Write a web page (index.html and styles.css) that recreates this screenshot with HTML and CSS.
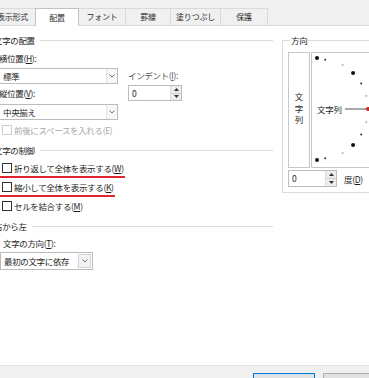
FILE: index.html
```html
<!DOCTYPE html>
<html lang="ja">
<head>
<meta charset="utf-8">
<title>セルの書式設定 - 配置</title>
<link rel="stylesheet" href="styles.css">
</head>
<body>
<div class="dlg">
  <div class="tabs">
    <div class="tab t1">表示形式</div>
    <div class="tab t2 sel">配置</div>
    <div class="tab t3">フォント</div>
    <div class="tab t4">罫線</div>
    <div class="tab t5">塗りつぶし</div>
    <div class="tab t6">保護</div>
  </div>
  <div class="panel">
    <div class="left">
      <div class="group"><span>文字の配置</span></div>
      <div class="sec">
        <div class="hv">
          <div class="hvl">
            <div class="lbl">横位置(<u>H</u>):</div>
            <div class="combo mt4"><span class="cv">標準</span><span class="arr"><svg width="6" height="4" viewBox="0 0 6 4"><polyline points="0.5,0.5 3,3 5.5,0.5" fill="none" stroke="#707070" stroke-width="1"/></svg></span></div>
            <div class="lbl mt3">縦位置(<u>V</u>):</div>
            <div class="combo mt5"><span class="cv">中央揃え</span><span class="arr"><svg width="6" height="4" viewBox="0 0 6 4"><polyline points="0.5,0.5 3,3 5.5,0.5" fill="none" stroke="#707070" stroke-width="1"/></svg></span></div>
          </div>
          <div class="hvr">
            <div class="lbl dim">インデント(<u>I</u>):</div>
            <div class="spin mt4"><span class="sv">0</span><span class="btns"><i><svg width="5" height="3" viewBox="0 0 5 3"><polygon points="0,3 2.5,0 5,3" fill="#333"/></svg></i><i><svg width="5" height="3" viewBox="0 0 5 3"><polygon points="0,0 5,0 2.5,3" fill="#333"/></svg></i></span></div>
          </div>
        </div>
        <div class="chk dis mt4"><span class="box"></span><span>前後にスペースを入れる(E)</span></div>
      </div>
      <div class="group mt8"><span>文字の制御</span></div>
      <div class="sec">
        <div class="chk red mt6"><span class="box"></span><span>折り返して全体を表示する(<u>W</u>)</span></div>
        <div class="chk red mt35"><span class="box"></span><span>縮小して全体を表示する(<u>K</u>)</span></div>
        <div class="chk mt35"><span class="box"></span><span>セルを結合する(<u>M</u>)</span></div>
      </div>
      <div class="group mt8"><span>右から左</span></div>
      <div class="sec2">
        <div class="lbl l3 mt5">文字の方向(<u>T</u>):</div>
        <div class="combo c3 mt3"><span class="cv">最初の文字に依存</span><span class="arr"><svg width="6" height="4" viewBox="0 0 6 4"><polyline points="0.5,0.5 3,3 5.5,0.5" fill="none" stroke="#707070" stroke-width="1"/></svg></span></div>
      </div>
    </div>
    <div class="right">
      <div class="frame">
        <div class="leg">方向</div>
        <div class="dirrow">
          <div class="vbox"><span class="vtext">文字列</span></div>
          <div class="dial">
            <svg width="80" height="114" viewBox="0 0 80 114">
              <circle cx="5" cy="5" r="2" fill="#111"/>
              <rect x="12.4" y="5.9" width="1.6" height="1.6" fill="#111"/>
              <rect x="29.7" y="11" width="1.8" height="1.8" fill="#b0b0b0"/>
              <circle cx="41.06" cy="19.94" r="2" fill="#111"/>
              <rect x="48.4" y="29.7" width="1.6" height="1.6" fill="#111"/>
              <rect x="53.4" y="42" width="1.8" height="1.8" fill="#b0b0b0"/>
              <line x1="33" y1="56" x2="55" y2="56" stroke="#555" stroke-width="1"/>
              <circle cx="56" cy="56" r="2.1" fill="#c42b1c"/>
              <rect x="53.4" y="68.3" width="1.8" height="1.8" fill="#b0b0b0"/>
              <rect x="48.4" y="80.7" width="1.6" height="1.6" fill="#111"/>
              <circle cx="41.06" cy="92.06" r="2" fill="#111"/>
              <rect x="29.7" y="99.3" width="1.8" height="1.8" fill="#b0b0b0"/>
              <rect x="12.4" y="104.5" width="1.6" height="1.6" fill="#111"/>
              <circle cx="5" cy="107" r="2" fill="#111"/>
              <text x="5" y="59.5" class="dtext">文字列</text>
            </svg>
          </div>
        </div>
        <div class="drow2">
          <div class="spin s2"><span class="sv">0</span><span class="btns"><i><svg width="5" height="3" viewBox="0 0 5 3"><polygon points="0,3 2.5,0 5,3" fill="#333"/></svg></i><i><svg width="5" height="3" viewBox="0 0 5 3"><polygon points="0,0 5,0 2.5,3" fill="#333"/></svg></i></span></div>
          <span class="deg">度(<u>D</u>)</span>
        </div>
      </div>
    </div>
  </div>
  <div class="footer">
    <div class="btn def">OK</div>
    <div class="btn">キャンセル</div>
  </div>
</div>
</body>
</html>
```

FILE: styles.css
```css
html, body {
  margin: 0;
  padding: 0;
}
body {
  width: 369px;
  height: 378px;
  overflow: hidden;
  background: #fff;
  color: #1e1e1e;
  font-family: "Noto Sans CJK JP", "Noto Sans", sans-serif;
  font-size: 8.5px;
  letter-spacing: -0.35px;
  line-height: 12px;
}
u { text-decoration: underline; text-underline-offset: 1px; }

.dlg {
  display: flex;
  flex-direction: column;
  height: 378px;
}

/* tabs */
.tabs {
  flex: none;
  height: 25px;
  background: #f0f0f0;
  border-bottom: 1px solid #d9d9d9;
  display: flex;
  align-items: flex-end;
}
.tab {
  flex: none;
  box-sizing: border-box;
  height: 17px;
  border: 1px solid #dadada;
  border-bottom: none;
  margin-left: -1px;
  background: #f0f0f0;
  display: flex;
  align-items: center;
  justify-content: center;
  font-size: 8px;
  letter-spacing: -0.2px;
  color: #2a2a2a;
  white-space: nowrap;
}
.t1 { width: 47px; margin-left: -11px; }
.t2 { width: 44px; }
.t3 { width: 48px; }
.t4 { width: 46px; }
.t5 { width: 51px; }
.t6 { width: 48px; }
.tab.sel {
  position: relative;
  z-index: 1;
  height: 18px;
  margin-bottom: -1px;
  background: #fff;
  border-color: #c2c2c2;
}

/* panel */
.panel {
  flex: 1;
  display: flex;
  padding-top: 8px;
  background: #fff;
  overflow: hidden;
}
.left {
  flex: none;
  width: 279px;
  margin-left: -6px;
}
.group {
  display: flex;
  align-items: center;
  height: 12px;
  white-space: nowrap;
}
.group::after {
  content: "";
  flex: 1;
  border-top: 1px solid #dcdcdc;
  margin-left: 5px;
}
.sec { padding-left: 5px; }
.sec2 { padding-left: 6px; }

.mt3 { margin-top: 3px; }
.mt4 { margin-top: 4px; }
.mt5 { margin-top: 5px; }
.mt6 { margin-top: 6px; }
.mt8 { margin-top: 8px; }
.mt35 { margin-top: 3.5px; }

.hv {
  display: flex;
  gap: 10px;
  margin-top: 6px;
}
.hvl { flex: none; width: 119px; }
.hvr { margin-top: 17px; }
.lbl { height: 12px; white-space: nowrap; }
.lbl.l3 { padding-left: 3px; }
.dim { color: #555; }

.combo {
  box-sizing: border-box;
  height: 16px;
  border: 1px solid #bcbcbc;
  background: #fff;
  display: flex;
  align-items: stretch;
}
.combo .cv {
  flex: 1;
  padding-left: 3px;
  line-height: 14px;
  white-space: nowrap;
}
.combo .arr {
  flex: none;
  width: 10px;
  border-left: 1px solid #e2e2e2;
  background: #f7f7f7;
  display: flex;
  align-items: center;
  justify-content: center;
}
.combo.c3 {
  width: 93px;
  height: 18px;
}
.combo.c3 .cv { line-height: 16px; padding-left: 3px; }
.combo.c3 .arr { width: 11px; border: 1px solid #d4d4d4; margin: 1px; background: #f3f3f3; }

.spin {
  flex: none;
  box-sizing: border-box;
  width: 54px;
  height: 16px;
  border: 1px solid #bcbcbc;
  background: #fff;
  display: flex;
}
.spin .sv {
  flex: 1;
  padding-left: 3px;
  line-height: 14px;
}
.spin .btns {
  flex: none;
  width: 10px;
  display: flex;
  flex-direction: column;
  border-left: 1px solid #dedede;
}
.spin .btns i {
  flex: 1;
  display: flex;
  align-items: center;
  justify-content: center;
  background: #ececec;
}
.spin .btns i + i { border-top: 1px solid #d0d0d0; }
.spin.s2 { width: 49px; height: 17px; }
.spin.s2 .sv { line-height: 15px; }

.chk {
  display: flex;
  align-items: center;
  height: 12px;
  width: max-content;
  padding-left: 3px;
  padding-right: 1px;
  white-space: nowrap;
}
.chk .box {
  flex: none;
  box-sizing: border-box;
  width: 10px;
  height: 10px;
  border: 1px solid #333;
  background: #fff;
  margin-right: 2px;
}
.chk.dis { color: #a8a8a8; }
.chk.dis .box { border-color: #cdcdcd; }
.chk.red {
  border-bottom: 2px solid #e0262e;
  padding-bottom: 1.5px;
  padding-left: 4px;
  margin-left: -1px;
}

/* right column */
.right {
  flex: none;
  width: 130px;
  margin-left: 9px;
  margin-top: 6px;
}
.frame {
  border: 1px solid #dcdcdc;
  border-right: none;
  padding: 0 0 5px 5px;
}
.leg {
  width: max-content;
  margin-top: -7px;
  margin-left: 2px;
  padding: 0 1px;
  background: #fff;
  height: 12px;
}
.dirrow {
  display: flex;
  gap: 1px;
  margin-top: 6px;
}
.vbox {
  flex: none;
  box-sizing: border-box;
  width: 22px;
  height: 116px;
  border: 1px solid #c8c8c8;
  display: flex;
  align-items: center;
  justify-content: center;
}
.vtext {
  writing-mode: vertical-rl;
  text-orientation: upright;
  letter-spacing: 3px;
  line-height: 12px;
}
.dial {
  flex: none;
  box-sizing: border-box;
  width: 80px;
  height: 116px;
  border: 1px solid #c8c8c8;
  border-right: none;
}
.dial svg { display: block; }
.dtext {
  font-family: "Noto Sans CJK JP", sans-serif;
  font-size: 8.5px;
  letter-spacing: -0.2px;
  fill: #1e1e1e;
}
.drow2 {
  display: flex;
  align-items: center;
  margin-top: 2px;
}
.deg { margin-left: 7px; white-space: nowrap; }

/* footer */
.footer {
  flex: none;
  box-sizing: border-box;
  height: 13px;
  border-top: 1px solid #dfdfdf;
  background: #f0f0f0;
  display: flex;
  gap: 8px;
  padding-left: 253px;
  padding-top: 7px;
  overflow: hidden;
}
.btn {
  flex: none;
  box-sizing: border-box;
  width: 62px;
  height: 22px;
  border: 1px solid #adadad;
  background: #e1e1e1;
  text-align: center;
  line-height: 20px;
}
.btn.def {
  border-color: #0078d7;
  box-shadow: inset 0 0 0 1px #cfe4f7;
}
```
